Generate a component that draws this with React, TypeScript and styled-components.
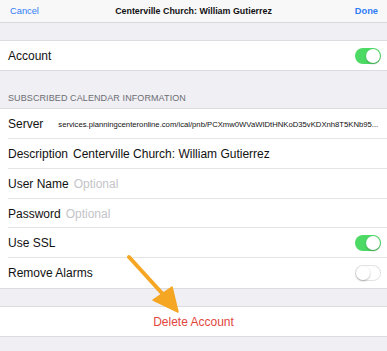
import React from "react";
import styled, { createGlobalStyle } from "styled-components";

const Global = createGlobalStyle`
  html, body { margin: 0; padding: 0; background: #efeff4; }
  body { font-family: "Liberation Sans", Arial, sans-serif; -webkit-font-smoothing: antialiased; }
  * { box-sizing: border-box; }
`;

const Page = styled.div`
  position: relative;
  width: 387px;
  height: 351px;
  background: #efeff4;
  overflow: hidden;
`;

const NavBar = styled.div`
  height: 23px;
  background: #f8f8f9;
  border-bottom: 1px solid #d9d9dc;
  display: flex;
  align-items: center;
  justify-content: space-between;
  padding: 0 9px 1px 10px;
  position: relative;
`;

const NavButton = styled.span<{ $bold?: boolean }>`
  color: #2f7cf6;
  font-size: 9.3px;
  font-weight: ${(p) => (p.$bold ? 700 : 400)};
`;

const NavTitle = styled.span`
  position: absolute;
  left: 0;
  right: 0;
  text-align: center;
  font-size: 8.9px;
  font-weight: 700;
  color: #111;
  pointer-events: none;
`;

const Spacer = styled.div<{ $h: number }>`
  height: ${(p) => p.$h}px;
`;

const Group = styled.div`
  background: #fff;
  border-top: 1px solid #dcdce0;
  border-bottom: 1px solid #dcdce0;
`;

const Row = styled.div<{ $h?: number; $last?: boolean }>`
  height: ${(p) => p.$h ?? 30}px;
  display: flex;
  align-items: center;
  padding: 0 6px 0 8px;
  position: relative;
  &::after {
    content: "";
    display: ${(p) => (p.$last ? "none" : "block")};
    position: absolute;
    left: 8px;
    right: 0;
    bottom: 0;
    height: 1px;
    background: #e4e4e7;
  }
`;

const Label = styled.span`
  font-size: 12px;
  color: #111;
  white-space: nowrap;
`;

const Value = styled.span<{ $placeholder?: boolean; $small?: boolean; $gap?: number }>`
  margin-left: ${(p) => p.$gap ?? 5}px;
  font-size: ${(p) => (p.$small ? 7.7 : 12)}px;
  color: ${(p) => (p.$placeholder ? "#c4c4c9" : "#111")};
  white-space: nowrap;
`;

const Grow = styled.div`
  flex: 1;
`;

const SectionHeader = styled.div`
  height: 37px;
  display: flex;
  align-items: flex-end;
  padding: 0 8px 5px;
  font-size: 9px;
  color: #6d6d72;
  letter-spacing: 0.1px;
`;

const Track = styled.div<{ $on: boolean }>`
  width: 26px;
  height: 16px;
  border-radius: 8px;
  background: ${(p) => (p.$on ? "#4cd964" : "#fff")};
  box-shadow: ${(p) => (p.$on ? "none" : "inset 0 0 0 1px #e3e3e6")};
  position: relative;
  flex-shrink: 0;
`;

const Knob = styled.div<{ $on: boolean }>`
  position: absolute;
  top: 1px;
  left: ${(p) => (p.$on ? "11px" : "1px")};
  width: 14px;
  height: 14px;
  border-radius: 50%;
  background: #fff;
  box-shadow: 0 1px 2px rgba(0, 0, 0, 0.28);
`;

const Toggle = ({ on }: { on: boolean }) => (
  <Track $on={on}>
    <Knob $on={on} />
  </Track>
);

const DeleteRow = styled.div`
  height: 29px;
  display: flex;
  align-items: center;
  justify-content: center;
  font-size: 12px;
  color: #e2463c;
`;

const ArrowLayer = styled.svg`
  position: absolute;
  left: 0;
  top: 0;
  pointer-events: none;
`;

export default function App() {
  return (
    <Page>
      <Global />
      <NavBar>
        <NavButton>Cancel</NavButton>
        <NavTitle>Centerville Church: William Gutierrez</NavTitle>
        <NavButton $bold>Done</NavButton>
      </NavBar>
      <Spacer $h={17} />
      <Group>
        <Row $h={29} $last>
          <Label>Account</Label>
          <Grow />
          <Toggle on />
        </Row>
      </Group>
      <SectionHeader>SUBSCRIBED CALENDAR INFORMATION</SectionHeader>
      <Group>
        <Row>
          <Label>Server</Label>
          <Value $small $gap={15}>
            services.planningcenteronline.com/ical/pnb/PCXmw0WVaWIDtHNKoD35vKDXnh8T5KNb95...
          </Value>
        </Row>
        <Row>
          <Label>Description</Label>
          <Value>Centerville Church: William Gutierrez</Value>
        </Row>
        <Row>
          <Label>User Name</Label>
          <Value $placeholder>Optional</Value>
        </Row>
        <Row $h={29}>
          <Label>Password</Label>
          <Value $placeholder>Optional</Value>
        </Row>
        <Row>
          <Label>Use SSL</Label>
          <Grow />
          <Toggle on />
        </Row>
        <Row $last>
          <Label>Remove Alarms</Label>
          <Grow />
          <Toggle on={false} />
        </Row>
      </Group>
      <Spacer $h={17} />
      <Group>
        <DeleteRow>Delete Account</DeleteRow>
      </Group>
      <ArrowLayer width="387" height="351" viewBox="0 0 387 351">
        <line x1="129" y1="257" x2="170" y2="302" stroke="#f5a623" strokeWidth="4" strokeLinecap="round" />
        <polygon points="178,312 153,300 172,287" fill="#f5a623" stroke="#f5a623" strokeWidth="1.5" strokeLinejoin="round" />
      </ArrowLayer>
    </Page>
  );
}
